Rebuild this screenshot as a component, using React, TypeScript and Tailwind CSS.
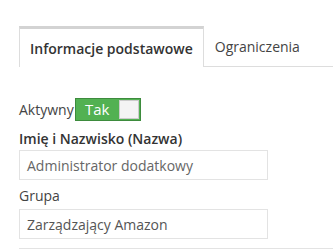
export default function App() {
  return (
    <div className="w-[333px] h-[249px] bg-white overflow-hidden pl-[19px] text-[14px] text-[#333]" style={{ fontFamily: '"Open Sans", sans-serif' }}>
      {/* Tabs */}
      <div className="flex mt-[26px] border-b border-[#ddd]">
        <div className="-mb-px h-[41px] px-[10px] flex items-center bg-white border-t-[3px] border-t-[#d3d3d3] border-x border-[#ddd] font-semibold text-[#333]">
          Informacje podstawowe
        </div>
        <div className="h-[40px] px-[11px] flex items-center text-[#444]">Ograniczenia</div>
      </div>

      {/* Aktywny toggle */}
      <div className="flex items-center mt-[31px] h-[23px]">
        <span className="text-[#444]">Aktywny</span>
        <div className="ml-[1px] flex h-[23px] w-[66px] border border-[#3d8b3d] bg-[#52b152]">
          <div className="flex-1 flex items-center justify-center text-white text-[15px] pb-[1px]">Tak</div>
          <div className="w-[20px] my-[1px] mr-[1px] bg-[#f4f4f4] border border-[#ccc]" />
        </div>
      </div>

      {/* Nazwa */}
      <div className="mt-[8px] font-semibold text-[#333] leading-[20px]">Imię i Nazwisko (Nazwa)</div>
      <div className="mt-[1px] w-[249px] h-[30px] border border-[#e3e3e3] flex items-center px-[7px] text-[#666]">
        Administrator dodatkowy
      </div>

      {/* Grupa */}
      <div className="mt-[6px] text-[#444] leading-[20px]">Grupa</div>
      <div className="mt-[3px] w-[249px] h-[30px] border border-[#e3e3e3] flex items-center px-[7px] text-[#555]">
        Zarządzający Amazon
      </div>

      <div className="mt-[9px] border-t border-[#e3e3e3]" />
    </div>
  );
}
